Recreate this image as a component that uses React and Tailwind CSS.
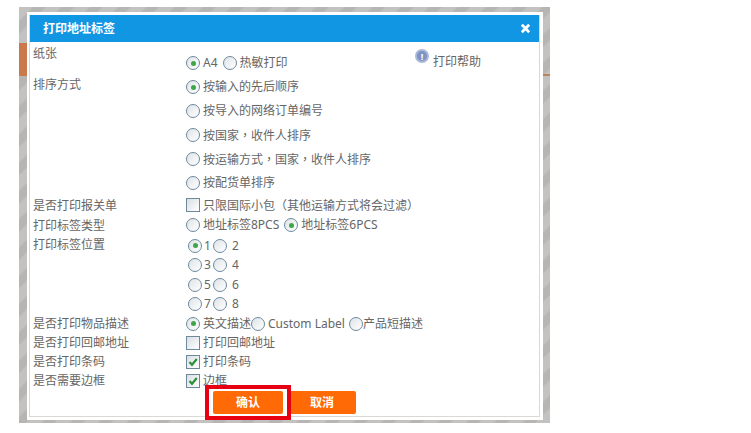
import React from "react";

const Radio = ({ checked, className = "" }) => (
  <span
    className={`relative inline-flex h-[14px] w-[14px] shrink-0 items-center justify-center rounded-full border border-[#6d8a9c] bg-gradient-to-br from-[#dfe4e7] to-white ${className}`}
  >
    {checked && <span className="h-[5px] w-[5px] rounded-full bg-[#3fa648]" />}
  </span>
);

const Checkbox = ({ checked }) => (
  <span className="inline-flex h-[14px] w-[14px] shrink-0 items-center justify-center border border-[#6d8a9c] bg-gradient-to-br from-[#d9dfe4] to-white">
    {checked && (
      <svg viewBox="0 0 12 12" className="h-[12px] w-[12px]">
        <path d="M2.5 6 L5 8.8 L9.8 3" fill="none" stroke="#2f8f3a" strokeWidth="2.2" />
      </svg>
    )}
  </span>
);

// centred full-width punctuation, as in the reference
const Punct = ({ children }) => (
  <span className="font-['Noto_Sans_CJK_TC',sans-serif]">{children}</span>
);

const Row = ({ label, height, children }) => (
  <div className={`flex ${height}`}>
    <div className="flex w-[156px] shrink-0 items-center pl-[3px] pt-[1px]">{label}</div>
    <div className="flex items-center">{children}</div>
  </div>
);

const sortOptions = [
  <>按输入的先后顺序</>,
  <>按导入的网络订单编号</>,
  <>按国家<Punct>，</Punct>收件人排序</>,
  <>按运输方式<Punct>，</Punct>国家<Punct>，</Punct>收件人排序</>,
  <>按配货单排序</>,
];

const positions = [
  ["1", "2"],
  ["3", "4"],
  ["5", "6"],
  ["7", "8"],
];

export default function App() {
  return (
    <div className="h-[433px] w-[751px] overflow-hidden bg-white pl-[19px] pt-[7px] font-['Noto_Sans','Noto_Sans_CJK_SC',sans-serif] text-[12px] text-[#666]">
      {/* stripes are the page behind the overlay */}
      <div className="relative h-[416px] w-[531px] bg-[repeating-linear-gradient(135deg,#c4c2c0_0,#c4c2c0_9px,#b6b5b4_11px,#b6b5b4_18px,#c4c2c0_20px)] pb-[3px] pl-[8px] pr-[7px] pt-[5px]">
        <div className="absolute left-0 top-[36px] h-[33px] w-[8px] bg-[#c9794a]" />
        <div className="absolute right-0 top-[67px] h-[2px] w-[7px] bg-[#b9835e]" />

        <div className="h-full bg-white pb-[3px] pl-[2px] pr-[3px] pt-[3px]">
          <div className="h-full border-b border-l border-r border-[#d8d8d8]">
            {/* Header */}
            <div className="flex h-[27px] items-center justify-between bg-[#1196e3] pl-[13px] pr-[8px] font-bold text-white">
              <span>打印地址标签</span>
              <svg viewBox="0 0 12 12" className="h-[11px] w-[11px]">
                <path d="M2 2 L10 10 M10 2 L2 10" stroke="white" strokeWidth="3" />
              </svg>
            </div>

            {/* Form */}
            <div className="flex h-[33px]">
              <div className="w-[156px] shrink-0 pl-[3px] pt-[3px] leading-[18px]">纸张</div>
              <div className="flex w-[229px] items-center pt-[9px]">
                <Radio checked />
                <span className="ml-[3px] mr-[5px]">A4</span>
                <Radio />
                <span className="ml-[3px]">热敏打印</span>
              </div>
              <div className="flex items-start pt-[7px]">
                <span className="flex h-[14px] w-[14px] items-center justify-center rounded-full border-2 border-[#a9b8d8] bg-[#7c93c4] text-[9px] font-bold leading-none text-white">
                  !
                </span>
                <span className="ml-[4px] mt-[4px] leading-[18px]">打印帮助</span>
              </div>
            </div>

            <div className="flex">
              <div className="w-[156px] shrink-0 pl-[3px] pt-[1px] leading-[18px]">排序方式</div>
              <div className="flex flex-col">
                {sortOptions.map((text, i) => (
                  <div key={i} className="flex h-[24px] items-center gap-[3px]">
                    <Radio checked={i === 0} />
                    <span>{text}</span>
                  </div>
                ))}
              </div>
            </div>

            <Row label="是否打印报关单" height="h-[20px]">
              <div className="flex items-center gap-[3px]">
                <Checkbox />
                <span>只限国际小包<Punct>（</Punct>其他运输方式将会过滤<Punct>）</Punct></span>
              </div>
            </Row>
            <Row label="打印标签类型" height="h-[20px]">
              <div className="flex items-center">
                <Radio />
                <span className="ml-[3px] mr-[5px]">地址标签8PCS</span>
                <Radio checked />
                <span className="ml-[3px]">地址标签6PCS</span>
              </div>
            </Row>

            <div className="flex">
              <div className="w-[156px] shrink-0 pl-[3px] pt-[1px] leading-[18px]">打印标签位置</div>
              <div className="flex flex-col pl-[2px] pt-[1px]">
                {positions.map(([a, b], i) => (
                  <div key={a} className="flex h-[19.5px] items-center">
                    <Radio checked={i === 0} />
                    <span className="ml-[2px] w-[9px]">{a}</span>
                    <Radio />
                    <span className="ml-[5px]">{b}</span>
                  </div>
                ))}
              </div>
            </div>

            <Row label="是否打印物品描述" height="h-[19px]">
              <div className="flex items-center">
                <Radio checked />
                <span className="ml-[3px]">英文描述</span>
                <Radio />
                <span className="ml-[3px] mr-[4px]">Custom Label</span>
                <Radio />
                <span>产品短描述</span>
              </div>
            </Row>
            <Row label="是否打印回邮地址" height="h-[19px]">
              <div className="flex items-center gap-[3px]">
                <Checkbox />
                <span>打印回邮地址</span>
              </div>
            </Row>
            <Row label="是否打印条码" height="h-[19px]">
              <div className="flex items-center gap-[3px]">
                <Checkbox checked />
                <span>打印条码</span>
              </div>
            </Row>
            <Row label="是否需要边框" height="h-[19px]">
              <div className="flex items-center gap-[3px]">
                <Checkbox checked />
                <span>边框</span>
              </div>
            </Row>

            {/* Buttons */}
            <div className="mt-[1px] flex gap-[5px] pl-[183px] font-bold text-white">
              <div className="relative">
                <button className="h-[23px] w-[70px] rounded-[2px] bg-[#ff6a06]">确认</button>
                <div className="absolute -bottom-[6px] -left-[8px] -right-[8px] -top-[6px] border-[4px] border-[#e60012]" />
              </div>
              <button className="h-[23px] w-[68px] rounded-[2px] bg-[#ff6a06]">取消</button>
            </div>
          </div>
        </div>
      </div>
    </div>
  );
}
